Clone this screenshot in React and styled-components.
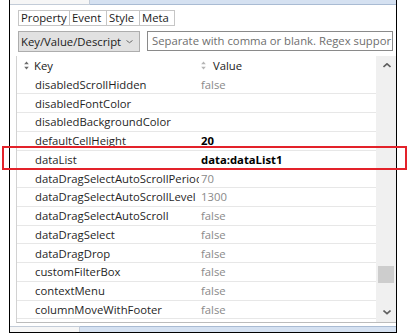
import React from 'react';
import styled, { createGlobalStyle } from 'styled-components';

const Global = createGlobalStyle`
  html, body { margin: 0; padding: 0; background: #fff; }
  body {
    font-family: "Open Sans", "Noto Sans", sans-serif;
    font-size: 11.3px;
    color: #1f1f1f;
  }
  * { box-sizing: border-box; }
`;

const Page = styled.div`
  position: relative;
  width: 409px;
  height: 334px;
  overflow: hidden;
  background: #fff;
`;

const Window = styled.div`
  margin-left: 9px;
  width: 388px;
  height: 333px;
  border: 1px solid #000;
  border-top: none;
  display: flex;
  flex-direction: column;
`;

const Strip = styled.div`
  display: flex;
  height: ${p => p.$h}px;
  flex: none;
`;

const StripTab = styled.div`
  width: ${p => p.$w}px;
  background: #f6f6f6;
  border-right: 1px solid #c3ccd8;
  ${p => (p.$top ? 'border-bottom: 1px solid #c3ccd8;' : 'border-top: 1px solid #c3ccd8;')}
`;

const StripFill = styled.div`
  flex: 1;
  background: #d5e1f1;
  ${p => (p.$top ? 'border-bottom: 1px solid #a9bbd3;' : 'border-top: 1px solid #a9bbd3;')}
`;

const Tabs = styled.div`
  display: flex;
  margin: 5px 0 0 8px;
  height: 16px;
  flex: none;
`;

const Tab = styled.div`
  width: ${p => p.$w}px;
  height: 16px;
  padding-left: 2px;
  border: 1px solid #c6c6c6;
  margin-left: ${p => (p.$first ? 0 : -1)}px;
  background: #fff;
  color: #1a1a1a;
  line-height: 13px;
  white-space: nowrap;
`;

const Toolbar = styled.div`
  display: flex;
  gap: 7px;
  margin: 5px 0 0 8px;
  height: 21px;
  flex: none;
`;

const Dropdown = styled.div`
  width: 122px;
  height: 21px;
  background: #e1e1e1;
  border: 1px solid #adadad;
  display: flex;
  align-items: center;
  justify-content: space-between;
  padding: 0 6px 0 2px;
  color: #1a1a1a;
  white-space: nowrap;
`;

const Search = styled.div`
  width: 246px;
  height: 20px;
  border: 1px solid #8a8a8a;
  background: #fff;
  padding-left: 4px;
  color: #6e6e6e;
  line-height: 17px;
  white-space: nowrap;
  overflow: hidden;
`;

const Grid = styled.div`
  display: flex;
  margin: 4px 0 0 6px;
  height: 267px;
  flex: none;
  border-left: 1px solid #d2d2d2;
  border-bottom: 1px solid #bcbcbc;
`;

const List = styled.div`
  width: 359px;
  overflow: hidden;
  display: flex;
  flex-direction: column;
`;

const HeaderRow = styled.div`
  height: 19.5px;
  flex: none;
  display: grid;
  grid-template-columns: 182px 1fr;
  align-items: center;
`;

const HeadCell = styled.div`
  display: flex;
  align-items: center;
  gap: ${p => p.$gap}px;
  padding-left: ${p => p.$pl}px;
  color: #1a1a1a;
`;

const Row = styled.div`
  height: 18.75px;
  flex: none;
  display: grid;
  grid-template-columns: 182px 1fr;
  align-items: center;
  border-bottom: 1px solid #e7e7e7;
`;

const KeyCell = styled.div`
  padding-left: 18px;
  white-space: nowrap;
  overflow: hidden;
  color: #1f1f1f;
`;

const ValueCell = styled.div`
  padding-left: 2px;
  white-space: nowrap;
  overflow: hidden;
  color: ${p => (p.$bold ? '#000' : '#8a8a8a')};
  font-weight: ${p => (p.$bold ? 700 : 400)};
`;

const Scrollbar = styled.div`
  width: 20px;
  background: #f0f0f0;
  display: flex;
  flex-direction: column;
`;

const ScrollButton = styled.div`
  height: ${p => p.$h}px;
  flex: none;
  display: flex;
  align-items: center;
  justify-content: center;
  padding-left: 1px;
`;

const Track = styled.div`
  flex: 1;
  display: flex;
  flex-direction: column;
`;

const Thumb = styled.div`
  margin: ${p => p.$top}px 2px 0 2px;
  height: 17px;
  background: #cdcdcd;
`;

const Highlight = styled.div`
  position: absolute;
  left: 2px;
  top: 146px;
  width: 405px;
  height: 24px;
  border: 2px solid #e3222a;
  pointer-events: none;
`;

const SortIcon = ({ color }) => (
  <svg width="5" height="9" viewBox="0 0 5 9">
    <path d="M2.5 0.5 L4.8 3.2 L0.2 3.2 Z" fill={color} />
    <path d="M0.2 5.8 L4.8 5.8 L2.5 8.5 Z" fill={color} />
  </svg>
);

const Chevron = ({ up, color, w = 7, h = 4, sw = 1 }) => (
  <svg width={w + 1} height={h + 1} viewBox={`0 0 ${w + 1} ${h + 1}`}>
    <polyline
      points={up ? `0.5,${h} ${(w + 1) / 2},0.8 ${w + 0.5},${h}` : `0.5,0.5 ${(w + 1) / 2},${h - 0.3} ${w + 0.5},0.5`}
      fill="none"
      stroke={color}
      strokeWidth={sw}
    />
  </svg>
);

const rows = [
  ['disabledScrollHidden', 'false'],
  ['disabledFontColor', ''],
  ['disabledBackgroundColor', ''],
  ['defaultCellHeight', '20', true],
  ['dataList', 'data:dataList1', true],
  ['dataDragSelectAutoScrollPeriod', '70'],
  ['dataDragSelectAutoScrollLevel', '1300'],
  ['dataDragSelectAutoScroll', 'false'],
  ['dataDragSelect', 'false'],
  ['dataDragDrop', 'false'],
  ['customFilterBox', 'false'],
  ['contextMenu', 'false'],
  ['columnMoveWithFooter', 'false'],
];

const tabs = [
  ['Property', 52],
  ['Event', 38],
  ['Style', 34],
  ['Meta', 36],
];

export default function App() {
  return (
    <Page>
      <Global />
      <Window>
        <Strip $h={5}>
          <StripTab $w={80} $top />
          <StripFill $top />
        </Strip>
        <Tabs>
          {tabs.map(([t, w], i) => (
            <Tab key={t} $w={w} $first={i === 0}>{t}</Tab>
          ))}
        </Tabs>
        <Toolbar>
          <Dropdown>
            <span>Key/Value/Descript</span>
            <Chevron color="#6a6a6a" w={6} h={3} sw={1} />
          </Dropdown>
          <Search>Separate with comma or blank. Regex suppor</Search>
        </Toolbar>
        <Grid>
          <List>
            <HeaderRow>
              <HeadCell $pl={7} $gap={5}>
                <SortIcon color="#6b6b6b" />
                <span>Key</span>
              </HeadCell>
              <HeadCell $pl={2} $gap={7}>
                <SortIcon color="#b5b5b5" />
                <span>Value</span>
              </HeadCell>
            </HeaderRow>
            {rows.map(([k, v, b]) => (
              <Row key={k}>
                <KeyCell>{k}</KeyCell>
                <ValueCell $bold={b}>{v}</ValueCell>
              </Row>
            ))}
          </List>
          <Scrollbar>
            <ScrollButton $h={19.5}>
              <Chevron up color="#606060" w={7} h={4} sw={1.6} />
            </ScrollButton>
            <Track>
              <Thumb $top={190.5} />
            </Track>
            <ScrollButton $h={19}>
              <Chevron color="#606060" w={7} h={4} sw={1.6} />
            </ScrollButton>
          </Scrollbar>
        </Grid>
        <Strip $h={6} style={{ marginTop: 3 }}>
          <StripTab $w={70} />
          <StripFill />
        </Strip>
      </Window>
      <Highlight />
    </Page>
  );
}
